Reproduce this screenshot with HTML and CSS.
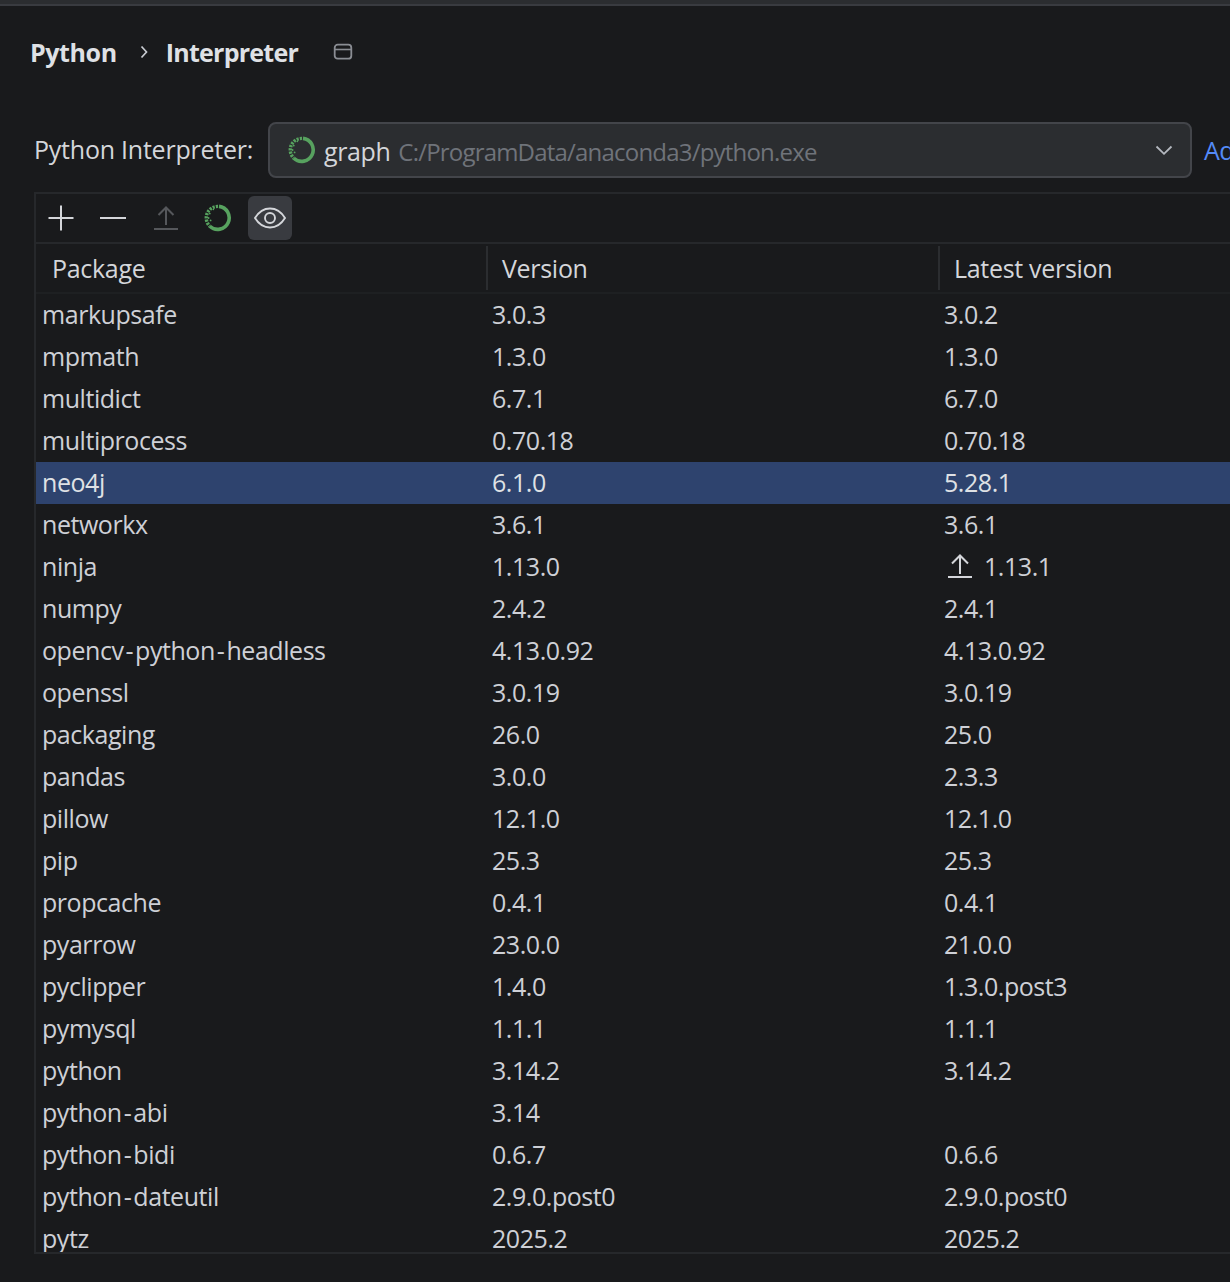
FILE: index.html
```html
<!DOCTYPE html>
<html lang="en">
<head>
<meta charset="utf-8">
<title>Python Interpreter</title>
<link rel="stylesheet" href="styles.css">
</head>
<body>
<svg class="defs" width="0" height="0" aria-hidden="true">
  <defs>
    <g id="spin">
      <path d="M15 2.400A11.500 11.500 0 1 1 5.800 22.200" fill="none" stroke="#57a25f" stroke-width="3.600"/>
      <path d="M14 2.400A11.500 11.500 0 0 0 5.800 22.200" fill="none" stroke="#57a25f" stroke-width="3.400" stroke-dasharray="2.200 1.100"/>
      <g fill="#57a25f">
        <circle cx="5.800" cy="9.600" r="0.900"/><circle cx="4.600" cy="14" r="0.900"/><circle cx="6.600" cy="16.400" r="0.900"/><circle cx="9.400" cy="5.400" r="0.800"/>
      </g>
    </g>
  </defs>
</svg>
<div class="topbar"></div>
<header class="crumbs">
  <span class="crumb-a">Python</span>
  <svg class="crumb-sep" width="8" height="14" viewBox="0 0 8 14"><path d="M1.500 1.500 6.500 7l-5 5.500" fill="none" stroke="#c9ccd2" stroke-width="1.700"/></svg>
  <span class="crumb-b">Interpreter</span>
  <svg class="crumb-win" width="20" height="18" viewBox="0 0 20 18"><rect x="1.700" y="1.700" width="16.600" height="14" rx="3" fill="none" stroke="#8a8d93" stroke-width="1.800"/><path d="M2 6.500h16" stroke="#8a8d93" stroke-width="1.600"/></svg>
</header>
<section class="interp">
  <label class="interp-label">Python Interpreter:</label>
  <div class="select">
    <svg class="spin" width="28" height="28" viewBox="0 0 28 28"><use href="#spin"/></svg>
    <span class="env">graph</span>
    <span class="path">C:/ProgramData/anaconda3/python.exe</span>
    <svg class="chev" width="18" height="12" viewBox="0 0 18 12"><path d="M1.500 2.500 9 9.800l7.500-7.300" fill="none" stroke="#b4b8bf" stroke-width="1.800"/></svg>
  </div>
  <a class="add">Add Interpreter</a>
</section>
<section class="table">
  <div class="tools">
    <svg class="tool" width="28" height="28" viewBox="0 0 28 28"><path d="M14 1.500v25M1.500 14h25" stroke="#d4d6da" stroke-width="2"/></svg>
    <svg class="tool" width="28" height="28" viewBox="0 0 28 28"><path d="M1 14h26" stroke="#d4d6da" stroke-width="2"/></svg>
    <svg class="tool tool-up" width="28" height="28" viewBox="0 0 28 28"><path d="M2 25h24M14 21V4M6.500 11 14 3.500 21.500 11" fill="none" stroke="#55575b" stroke-width="2"/></svg>
    <svg class="tool" width="28" height="28" viewBox="0 0 28 28"><use href="#spin"/></svg>
    <span class="tool-on"><svg width="32" height="22" viewBox="0 0 32 22"><path d="M1 11C5 4.500 10 1.500 16 1.500S27 4.500 31 11C27 17.500 22 20.500 16 20.500S5 17.500 1 11Z" fill="none" stroke="#d4d6da" stroke-width="1.900"/><circle cx="16" cy="11" r="5" fill="none" stroke="#d4d6da" stroke-width="1.900"/></svg></span>
  </div>
  <div class="head">
    <div class="hcell">Package</div>
    <div class="hcell">Version</div>
    <div class="hcell">Latest version</div>
  </div>
  <div class="rows">
    <div class="row"><span>markupsafe</span><span>3.0.3</span><span>3.0.2</span></div>
    <div class="row"><span>mpmath</span><span>1.3.0</span><span>1.3.0</span></div>
    <div class="row"><span>multidict</span><span>6.7.1</span><span>6.7.0</span></div>
    <div class="row"><span>multiprocess</span><span>0.70.18</span><span>0.70.18</span></div>
    <div class="row selected"><span>neo4j</span><span>6.1.0</span><span>5.28.1</span></div>
    <div class="row"><span>networkx</span><span>3.6.1</span><span>3.6.1</span></div>
    <div class="row"><span>ninja</span><span>1.13.0</span><span class="upd"><svg width="26" height="26" viewBox="0 0 26 26"><path d="M1 24h24M13 21V3M5 10.500 13 2.500 21 10.500" fill="none" stroke="#d4d6da" stroke-width="2"/></svg>1.13.1</span></div>
    <div class="row"><span>numpy</span><span>2.4.2</span><span>2.4.1</span></div>
    <div class="row"><span>opencv<span class="hy">-</span>python<span class="hy">-</span>headless</span><span>4.13.0.92</span><span>4.13.0.92</span></div>
    <div class="row"><span>openssl</span><span>3.0.19</span><span>3.0.19</span></div>
    <div class="row"><span>packaging</span><span>26.0</span><span>25.0</span></div>
    <div class="row"><span>pandas</span><span>3.0.0</span><span>2.3.3</span></div>
    <div class="row"><span>pillow</span><span>12.1.0</span><span>12.1.0</span></div>
    <div class="row"><span>pip</span><span>25.3</span><span>25.3</span></div>
    <div class="row"><span>propcache</span><span>0.4.1</span><span>0.4.1</span></div>
    <div class="row"><span>pyarrow</span><span>23.0.0</span><span>21.0.0</span></div>
    <div class="row"><span>pyclipper</span><span>1.4.0</span><span>1.3.0.post3</span></div>
    <div class="row"><span>pymysql</span><span>1.1.1</span><span>1.1.1</span></div>
    <div class="row"><span>python</span><span>3.14.2</span><span>3.14.2</span></div>
    <div class="row"><span>python<span class="hy">-</span>abi</span><span>3.14</span><span></span></div>
    <div class="row"><span>python<span class="hy">-</span>bidi</span><span>0.6.7</span><span>0.6.6</span></div>
    <div class="row"><span>python<span class="hy">-</span>dateutil</span><span>2.9.0.post0</span><span>2.9.0.post0</span></div>
    <div class="row"><span>pytz</span><span>2025.2</span><span>2025.2</span></div>
  </div>
</section>
</body>
</html>
```
FILE: styles.css
```css
* { box-sizing: border-box; }
html, body { margin: 0; height: 1282px; overflow: hidden; }
body {
  background: #191a1c;
  color: #d4d6da;
  font-family: "Open Sans", "Noto Sans", sans-serif;
  font-size: 25px;
  letter-spacing: -0.45px;
}
.defs { display: block; height: 0; }
.topbar { height: 6px; background: #2b2d30; border-bottom: 2px solid #393b40; }
.crumbs {
  display: flex; align-items: center;
  height: 92px; padding: 0 0 0 30px; margin-bottom: 24px;
  font-weight: 700; font-size: 25px; color: #dfe1e5;
}
.crumb-a { letter-spacing: -0.4px; }
.crumb-b { letter-spacing: -0.75px; }
.crumb-sep { margin: 0 18px 0 23px; }
.crumb-win { margin: 0 0 0 35px; }
.interp { display: flex; align-items: center; height: 56px; padding-left: 34px; white-space: nowrap; overflow: hidden; }
.interp-label { width: 234px; flex: none; margin-top: -3px; letter-spacing: -0.23px; }
.select {
  flex: none; width: 924px; height: 56px;
  display: flex; align-items: center;
  padding: 0 17px 0 18px;
  background: #2b2d30; border: 2px solid #43454a; border-radius: 8px;
}
.select .spin { flex: none; margin-right: 8px; }
.env { margin-right: 8px; padding-top: 2px; letter-spacing: -0.4px; }
.path { color: #6f737a; flex: 1; font-size: 24px; letter-spacing: -0.8px; padding-top: 2px; }
.chev { flex: none; }
.add { flex: none; margin-left: 12px; color: #548af7; }
.table {
  margin: 14px 0 0 34px; height: 1062px; overflow: hidden;
  border: 2px solid #26282b; border-right: 0;
}
.tools {
  height: 50px; display: flex; align-items: center; gap: 24px;
  padding-left: 11px; border-bottom: 2px solid #26282b;
}
.tool { flex: none; }
.tool-up { margin-left: 1px; }
.tool-on {
  display: flex; align-items: center; justify-content: center;
  width: 44px; height: 44px; margin-left: -8px;
  background: #393b40; border-radius: 6px;
}
.head { display: grid; grid-template-columns: 452px 452px 1fr; height: 50px; border-bottom: 2px solid #1e2022; letter-spacing: -0.3px; }
.hcell { display: flex; align-items: center; padding-left: 14px; border-right: 2px solid #2b2d30; margin: 2px 0; }
.hcell:first-child { padding-left: 16px; }
.hcell:last-child { border-right: 0; }
.row {
  display: grid; grid-template-columns: 450px 452px 1fr;
  height: 42px; align-items: center; padding: 0 0 2px 6px;
  white-space: nowrap; color: #ced0d6;
}
.hy { margin: 0 2px; }
.selected { background: #2e436e; color: #dfe1e5; }
.upd { display: flex; align-items: center; gap: 11px; padding-left: 3px; }
.upd svg { flex: none; }
```
